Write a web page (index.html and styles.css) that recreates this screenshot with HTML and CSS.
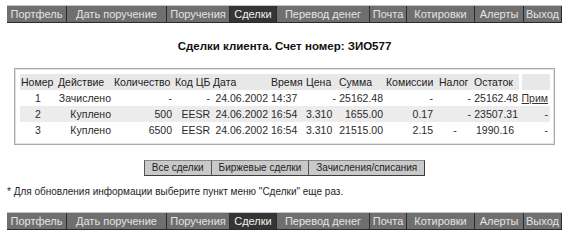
FILE: index.html
```html
<!DOCTYPE html>
<html lang="ru">
<head>
<meta charset="utf-8">
<title>Сделки клиента</title>
<link rel="stylesheet" href="styles.css">
</head>
<body>
<div class="page">
  <nav class="menu">
    <a class="mi m1" href="#">Портфель</a>
    <a class="mi m2" href="#">Дать поручение</a>
    <a class="mi m3" href="#">Поручения</a>
    <a class="mi m4 active" href="#">Сделки</a>
    <a class="mi m5" href="#">Перевод денег</a>
    <a class="mi m6" href="#">Почта</a>
    <a class="mi m7" href="#">Котировки</a>
    <a class="mi m8" href="#">Алерты</a>
    <a class="mi m9" href="#">Выход</a>
  </nav>

  <h1 class="title">Сделки клиента. Счет номер: ЗИО577</h1>

  <div class="box">
    <table class="deals">
      <thead>
        <tr>
          <th class="c1">Номер</th>
          <th class="c2">Действие</th>
          <th class="c3">Количество</th>
          <th class="c4">Код ЦБ</th>
          <th class="c5">Дата</th>
          <th class="c6">Время</th>
          <th class="c7">Цена</th>
          <th class="c8">Сумма</th>
          <th class="c9">Комиссии</th>
          <th class="c10">Налог</th>
          <th class="c11">Остаток</th>
          <th class="c12"></th>
        </tr>
      </thead>
      <tbody>
        <tr>
          <td class="ctr">1</td>
          <td class="r">Зачислено</td>
          <td class="r">-</td>
          <td class="r">-</td>
          <td class="r">24.06.2002</td>
          <td>14:37</td>
          <td class="r">-</td>
          <td class="r">25162.48</td>
          <td class="r pr">-</td>
          <td class="r">-</td>
          <td class="r">25162.48</td>
          <td class="r"><a class="note" href="#">Прим</a></td>
        </tr>
        <tr class="alt">
          <td class="ctr">2</td>
          <td class="r">Куплено</td>
          <td class="r">500</td>
          <td class="r">EESR</td>
          <td class="r">24.06.2002</td>
          <td>16:54</td>
          <td class="l">3.310</td>
          <td class="r">1655.00</td>
          <td class="r pr">0.17</td>
          <td class="r">-</td>
          <td class="r">23507.31</td>
          <td class="r">-</td>
        </tr>
        <tr>
          <td class="ctr">3</td>
          <td class="r">Куплено</td>
          <td class="r">6500</td>
          <td class="r">EESR</td>
          <td class="r">24.06.2002</td>
          <td>16:54</td>
          <td class="l">3.310</td>
          <td class="r">21515.00</td>
          <td class="r pr">2.15</td>
          <td class="ctr">-</td>
          <td class="r pr2">1990.16</td>
          <td class="r">-</td>
        </tr>
      </tbody>
    </table>
  </div>

  <div class="tabs">
    <a class="tab" href="#">Все сделки</a>
    <a class="tab" href="#">Биржевые сделки</a>
    <a class="tab" href="#">Зачисления/списания</a>
  </div>

  <p class="hint">* Для обновления информации выберите пункт меню "Сделки" еще раз.</p>

  <nav class="menu">
    <a class="mi m1" href="#">Портфель</a>
    <a class="mi m2" href="#">Дать поручение</a>
    <a class="mi m3" href="#">Поручения</a>
    <a class="mi m4 active" href="#">Сделки</a>
    <a class="mi m5" href="#">Перевод денег</a>
    <a class="mi m6" href="#">Почта</a>
    <a class="mi m7" href="#">Котировки</a>
    <a class="mi m8" href="#">Алерты</a>
    <a class="mi m9" href="#">Выход</a>
  </nav>
</div>
</body>
</html>
```
FILE: styles.css
```css
html, body {
  margin: 0;
  padding: 0;
  background: #ffffff;
}
body {
  font-family: "Liberation Sans", Arial, sans-serif;
  font-size: 11px;
  color: #1e1e1e;
}
.page {
  padding: 5px 8px 0 7px;
}

/* menu bar */
.menu {
  display: flex;
  width: 555px;
  height: 16px;
  background: #6f6f6f;
  border-top: 1px solid #c4c4c4;
  border-bottom: 1px solid #2a2a2a;
  overflow: hidden;
}
.mi {
  flex: none;
  box-sizing: border-box;
  display: block;
  padding: 0;
  text-align: center;
  line-height: 16px;
  font-size: 11px;
  color: #e4e4e4;
  text-decoration: none;
  white-space: nowrap;
  border-right: 1px solid #2c2c2c;
}
.m1 { width: 60px; }
.m2 { width: 100px; }
.m3 { width: 63px; }
.m4 { width: 47px; }
.m5 { width: 93px; }
.m6 { width: 37px; }
.m7 { width: 68px; }
.m8 { width: 49px; }
.m9 { width: 38px; }
.mi.active {
  background: #353535;
  color: #f0f0f0;
}

/* title */
.title {
  margin: 16px 0 0 0;
  font-size: 11.5px;
  font-weight: bold;
  line-height: 14px;
  text-align: center;
  color: #111;
}

/* table box */
.box {
  margin: 15px 0 0 7px;
  width: 534px;
  padding: 5px 0 6px 5px;
  border: 1px solid #a8a8a8;
  box-shadow: inset 1px 1px 0 #e2e2e2, inset -1px -1px 0 #e2e2e2;
}
.deals {
  border-collapse: collapse;
  width: 530px;
  table-layout: fixed;
}
.deals th, .deals td {
  box-sizing: border-box;
  padding: 0 2px 0 1px;
  height: 16px;
  line-height: 16px;
  font-size: 10.5px;
  white-space: nowrap;
  overflow: hidden;
}
.deals th {
  font-weight: normal;
  text-align: left;
  background: #e8e8e8;
  color: #222;
}
.deals th.c12 {
  border-left: 3px solid #ffffff;
}
.deals td {
  color: #2a2a2a;
}
.deals tr.alt td {
  background: #ececec;
}
.c1 { width: 37px; }
.c2 { width: 56px; }
.c3 { width: 61px; }
.c4 { width: 38px; }
.c5 { width: 58px; }
.c6 { width: 35px; }
.c7 { width: 33px; }
.c8 { width: 47px; }
.c9 { width: 53px; }
.c10 { width: 35px; }
.c11 { width: 47px; }
.c12 { width: 30px; }
.deals .r { text-align: right; }
.deals .l { text-align: left; }
.deals .ctr { text-align: center; }
.deals .pr { padding-right: 5px; }
.deals .pr2 { padding-right: 6px; }
.note {
  color: #333;
  text-decoration: underline;
}

/* tab buttons */
.tabs {
  display: flex;
  justify-content: center;
  margin: 15px 0 0 0;
}
.tab {
  display: block;
  height: 14px;
  line-height: 14px;
  padding: 0 7px;
  background: #c9c9c9;
  color: #222;
  text-decoration: none;
  font-size: 10px;
  border-top: 1px solid #8a8a8a;
  border-bottom: 1px solid #3c3c3c;
  border-left: 1px solid #555;
}
.tab:last-child {
  border-right: 1px solid #3c3c3c;
}

/* hint */
.hint {
  margin: 10px 0 0 0;
  font-size: 10px;
  line-height: 12px;
  color: #1e1e1e;
}
.hint + .menu {
  margin-top: 14px;
}
```
